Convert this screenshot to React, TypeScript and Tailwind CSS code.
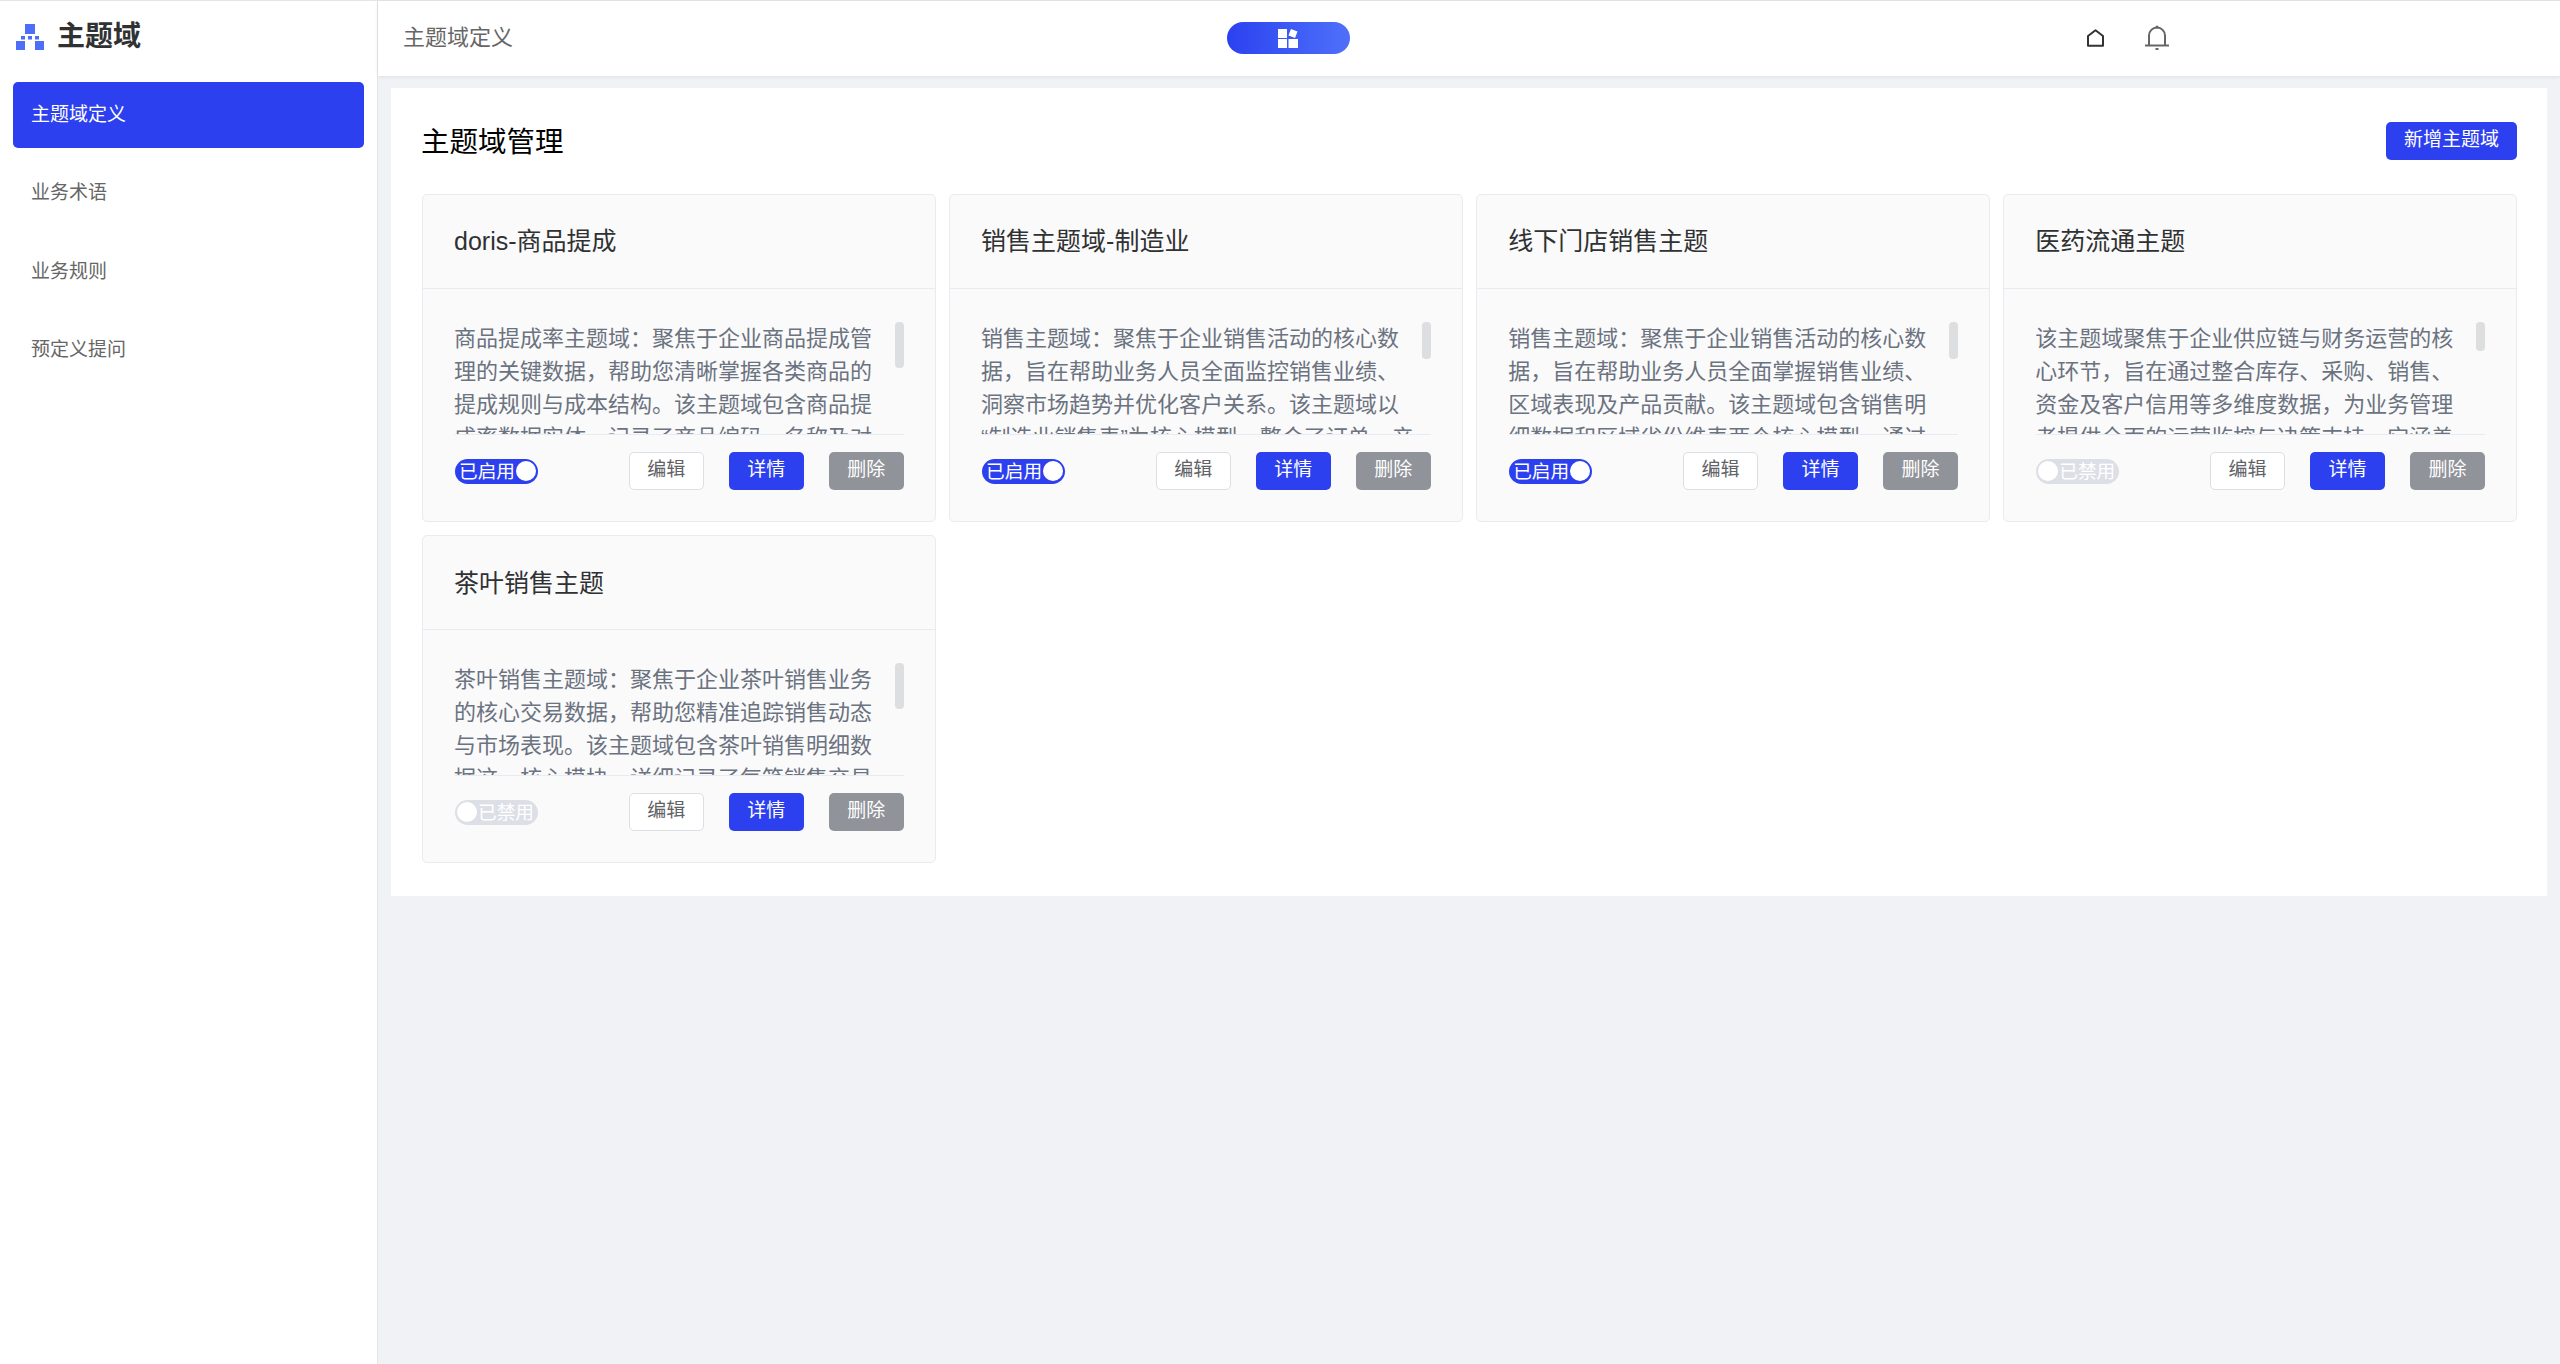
const NAV = ["主题域定义", "业务术语", "业务规则", "预定义提问"];

type Domain = { title: string; desc: string; enabled: boolean; thumb: string };

const DOMAINS: Domain[] = [
  {
    title: "doris-商品提成",
    enabled: true,
    thumb: "h-[46px]",
    desc: "商品提成率主题域：聚焦于企业商品提成管理的关键数据，帮助您清晰掌握各类商品的提成规则与成本结构。该主题域包含商品提成率数据实体，记录了商品编码、名称及对应的提成比例与成本价格，可用于分析不同商品的提成水平。",
  },
  {
    title: "销售主题域-制造业",
    enabled: true,
    thumb: "h-[37px]",
    desc: "销售主题域：聚焦于企业销售活动的核心数据，旨在帮助业务人员全面监控销售业绩、洞察市场趋势并优化客户关系。该主题域以“制造业销售表”为核心模型，整合了订单、产品、客户、区域与销售人员等多维度信息。",
  },
  {
    title: "线下门店销售主题",
    enabled: true,
    thumb: "h-[37px]",
    desc: "销售主题域：聚焦于企业销售活动的核心数据，旨在帮助业务人员全面掌握销售业绩、区域表现及产品贡献。该主题域包含销售明细数据和区域省份维表两个核心模型，通过门店、产品与时间等维度进行关联分析。",
  },
  {
    title: "医药流通主题",
    enabled: false,
    thumb: "h-[29px]",
    desc: "该主题域聚焦于企业供应链与财务运营的核心环节，旨在通过整合库存、采购、销售、资金及客户信用等多维度数据，为业务管理者提供全面的运营监控与决策支持。它涵盖了药品的入库、出库、调拨与盘点记录。",
  },
  {
    title: "茶叶销售主题",
    enabled: false,
    thumb: "h-[46px]",
    desc: "茶叶销售主题域：聚焦于企业茶叶销售业务的核心交易数据，帮助您精准追踪销售动态与市场表现。该主题域包含茶叶销售明细数据这一核心模块，详细记录了每笔销售交易的日期、门店、品类、数量与金额等信息。",
  },
];

function Logo() {
  return (
    <svg width="28" height="26" viewBox="0 0 28 26" fill="#4f6ef7" className="shrink-0">
      <rect x="9" y="0" width="10" height="10" />
      <rect x="5" y="12" width="4" height="3.5" />
      <rect x="12" y="12" width="4" height="3.5" />
      <rect x="19" y="12" width="4" height="3.5" />
      <rect x="0" y="17" width="9" height="9" />
      <rect x="19" y="17" width="9" height="9" />
    </svg>
  );
}

function AppsIcon() {
  return (
    <svg width="20" height="19" viewBox="0 0 20 19" fill="#fff">
      <rect x="0" y="0" width="9" height="9" />
      <rect x="0" y="10" width="9" height="9" />
      <rect x="10.5" y="10" width="9.5" height="9" />
      <rect x="11.5" y="1" width="7" height="7" transform="rotate(20 15 4.5)" />
    </svg>
  );
}

function HomeIcon() {
  return (
    <svg width="17" height="18" viewBox="0 0 17 18" fill="none" stroke="#333" strokeWidth="2">
      <path d="M8.5 1.3 1 7v9.8h15V7z" strokeLinejoin="round" />
    </svg>
  );
}

function BellIcon() {
  return (
    <svg width="24" height="26" viewBox="0 0 24 26" fill="none" stroke="#666" strokeWidth="2">
      <path d="M4 20.5V10.5a8 8 0 0 1 16 0v10" />
      <path d="M0 20.5h24" />
      <circle cx="12" cy="2" r="1.5" fill="#666" stroke="none" />
      <path d="M10.5 24h3" />
    </svg>
  );
}

function Switch({ on }: { on: boolean }) {
  if (on) {
    return (
      <div className="flex h-[25px] w-[83px] items-center rounded-full bg-[#2c40f0] pl-1 text-[18.67px] leading-[25px] text-white">
        <span className="w-[57px]">已启用</span>
        <span className="h-5 w-5 rounded-full bg-white" />
      </div>
    );
  }
  return (
    <div className="flex h-[25px] w-[83px] items-center rounded-full bg-[#dcdfe6] pl-[2px] text-[18.67px] leading-[25px] text-white">
      <span className="h-5 w-5 rounded-full bg-white" />
      <span className="ml-[1px]">已禁用</span>
    </div>
  );
}

function DomainCard({ domain }: { domain: Domain }) {
  return (
    <div className="rounded-[5px] border border-[#e8ebf2] bg-[#fafafa]">
      <div className="flex h-[94px] items-center border-b border-[#e8ebf2] pt-[1px] pl-[31px] text-[25px] text-[#303133]">
        {domain.title}
      </div>
      <div className="pt-[33px] pr-[31px] pb-[31px] pl-[32px]">
        <div className="flex h-[113px] border-b border-[#e8ebf2]">
          <p className="min-w-0 flex-1 overflow-hidden pr-[6px] -ml-[1px] text-[22px] leading-[33px] text-[#6b7280]">
            {domain.desc}
          </p>
          <div className="w-[9px] shrink-0">
            <div className={`${domain.thumb} rounded-[4px] bg-[#dcdee0]`} />
          </div>
        </div>
        <div className="mt-[17px] flex items-center">
          <Switch on={domain.enabled} />
          <button className="ml-auto h-[38px] w-[75px] rounded-[5px] border border-[#dcdfe6] bg-white pb-[2px] text-[19px] text-[#606266]">
            编辑
          </button>
          <button className="ml-[25px] h-[38px] w-[75px] rounded-[5px] bg-[#2c40f0] pb-[2px] text-[19px] text-white">
            详情
          </button>
          <button className="ml-[25px] h-[38px] w-[75px] rounded-[5px] bg-[#909399] pb-[2px] text-[19px] text-white">
            删除
          </button>
        </div>
      </div>
    </div>
  );
}

export default function App() {
  return (
    <div
      lang="zh-CN"
      className="flex h-screen border-t border-[#e5e5e5] bg-[#f0f2f5] font-['Liberation_Sans','Noto_Sans_CJK_SC',sans-serif]"
    >
      <aside className="w-[378px] shrink-0 border-r border-[#e6e6e6] bg-white">
        <div className="flex h-[81px] items-start pt-[23px] pl-4">
          <Logo />
          <span className="ml-[13px] text-[28px] leading-[26px] font-bold text-[#303133]">主题域</span>
        </div>
        <nav className="flex flex-col gap-[12.5px] px-[13px]">
          {NAV.map((label, i) => (
            <div
              key={label}
              className={
                i === 0
                  ? "flex h-[66px] items-center rounded-[5px] bg-[#2c40f0] pl-[18px] text-[19px] text-white"
                  : "flex h-[66px] items-center rounded-[5px] pl-[18px] text-[19px] text-[#666]"
              }
            >
              {label}
            </div>
          ))}
        </nav>
      </aside>
      <div className="flex min-w-0 flex-1 flex-col">
        <header className="flex h-[75px] shrink-0 items-center bg-white pb-[1px] pl-[25px] shadow-[0_1px_4px_rgba(0,21,41,0.08)]">
          <span className="w-[111px] pb-[1px] text-[22px] text-[#666]">主题域定义</span>
          <div className="ml-[713px] flex h-[32px] w-[123px] items-center justify-center rounded-full bg-gradient-to-r from-[#2c40f0] to-[#4f6ffa] pr-[2px]">
            <AppsIcon />
          </div>
          <div className="ml-[737px]">
            <HomeIcon />
          </div>
          <div className="ml-[41px]">
            <BellIcon />
          </div>
        </header>
        <main className="px-[13px] pt-[12px]">
          <section className="bg-white pt-[34px] pr-[30px] pb-[33px] pl-[31px]">
            <div className="flex h-[38px] items-center justify-between">
              <h1 className="-ml-[1px] pt-[2px] text-[28.5px] text-black">主题域管理</h1>
              <button className="h-[38px] w-[131px] rounded-[5px] bg-[#2c40f0] pb-[2px] text-[19px] text-white">
                新增主题域
              </button>
            </div>
            <div className="mt-[34px] grid grid-cols-4 gap-[13.33px]">
              {DOMAINS.map((d) => (
                <DomainCard key={d.title} domain={d} />
              ))}
            </div>
          </section>
        </main>
      </div>
    </div>
  );
}
